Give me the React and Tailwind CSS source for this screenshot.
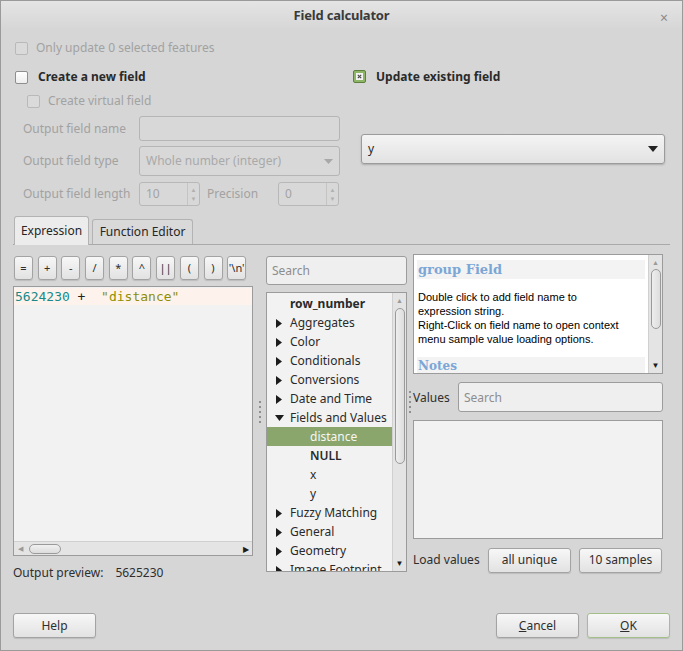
import React from 'react'

const BTN = 'rounded-[3px] border border-[#a3a3a3] bg-gradient-to-b from-[#f7f7f7] to-[#e2e2e2] shadow-[0_1px_1px_rgba(0,0,0,0.12)] flex items-center justify-center text-[#2e2e2e]'

function Check({ state = 'off', disabled = false }) {
  if (state === 'on') {
    return (
      <span className="w-[13px] h-[13px] rounded-[2px] border border-[#5f7f40] bg-[#8fb567] flex items-center justify-center shrink-0">
        <svg width="7" height="7" viewBox="0 0 7 7">
          <rect width="7" height="7" fill="#f4f4f4" />
          <path d="M1.8 1.8 L5.2 5.2 M5.2 1.8 L1.8 5.2" stroke="#4a4a4a" strokeWidth="1.2" />
        </svg>
      </span>
    )
  }
  return (
    <span
      className={`w-[13px] h-[13px] rounded-[2px] border shrink-0 ${
        disabled ? 'border-[#b9b9b9] bg-[#dadada]' : 'border-[#8e8e8e] bg-gradient-to-b from-white to-[#eeeeee]'
      }`}
    />
  )
}

function Spin({ value, w }) {
  return (
    <div className={`h-[24px] ${w} rounded-[3px] border border-[#b8b8b8] bg-[#d8d8d8] flex items-center`}>
      <span className="flex-1 pl-[6px] text-[#a3a3a3]">{value}</span>
      <div className="w-[12px] h-full border-l border-[#c4c4c4] flex flex-col items-center justify-center gap-[3px] text-[6px] leading-none text-[#b0b0b0]">
        <span>▲</span>
        <span>▼</span>
      </div>
    </div>
  )
}

function Arrow({ dir }) {
  if (dir === 'r') {
    return (
      <svg width="6" height="9" viewBox="0 0 6 9"><path d="M0 0 L6 4.5 L0 9 Z" fill="#1c1c1c" /></svg>
    )
  }
  return (
    <svg width="9" height="6" viewBox="0 0 9 6"><path d="M0 0 L9 0 L4.5 6 Z" fill="#1c1c1c" /></svg>
  )
}

const TREE = [
  { t: 'row_number', bold: true },
  { t: 'Aggregates', arrow: 'r' },
  { t: 'Color', arrow: 'r' },
  { t: 'Conditionals', arrow: 'r' },
  { t: 'Conversions', arrow: 'r' },
  { t: 'Date and Time', arrow: 'r' },
  { t: 'Fields and Values', arrow: 'd' },
  { t: 'distance', child: true, sel: true },
  { t: 'NULL', child: true, medium: true },
  { t: 'x', child: true },
  { t: 'y', child: true },
  { t: 'Fuzzy Matching', arrow: 'r' },
  { t: 'General', arrow: 'r' },
  { t: 'Geometry', arrow: 'r' },
  { t: 'Image Footprint', arrow: 'r' },
]

const OPS = ['=', '+', '-', '/', '*', '^', '||', '(', ')', "'\\n'"]

function VScroll({ thumbTop, thumbH }) {
  return (
    <div className="w-[14px] h-full bg-[#e4e4e4] border-l border-[#d0d0d0] flex flex-col items-center">
      <span className="mt-[4px] text-[7px] leading-none text-[#9a9a9a]">▲</span>
      <div
        className="w-[10px] rounded-[5px] border border-[#9a9a9a] bg-gradient-to-r from-[#eeeeee] to-[#dddddd]"
        style={{ marginTop: thumbTop, height: thumbH }}
      />
      <span className="mt-auto mb-[4px] text-[8px] leading-none text-[#1c1c1c]">▼</span>
    </div>
  )
}

function Dots({ cls = '' }) {
  return (
    <div className={`flex flex-col gap-[3px] ${cls}`}>
      {[0, 1, 2, 3, 4].map((i) => (
        <span key={i} className="w-[2px] h-[2px] bg-[#8f8f8f]" />
      ))}
    </div>
  )
}

export default function App() {
  return (
    <div className="w-[683px] h-[651px] bg-[#d6d6d6] border border-[#9a9a9a] flex flex-col font-['Noto_Sans',sans-serif] text-[12px] text-[#2e2e2e] overflow-hidden">
      {/* Title bar */}
      <div className="h-[29px] shrink-0 relative flex items-center justify-center bg-gradient-to-b from-[#e4e4e4] to-[#d6d6d6]">
        <span className="text-[13px] font-bold text-[#3a3a3a] tracking-[-0.2px]">Field calculator</span>
        <span className="absolute right-[14px] top-[6px] text-[14px] text-[#8a8a8a]">×</span>
      </div>

      <div className="flex-1 flex flex-col px-[12px]">
        {/* Only update */}
        <div className="mt-[11px] h-[14px] flex items-center gap-[8px] pl-[2px]">
          <Check disabled />
          <span className="text-[#a2a2a2]">Only update 0 selected features</span>
        </div>

        <div className="flex">
          {/* Left form */}
          <div className="w-[327px] shrink-0 flex flex-col">
            <div className="mt-[15px] h-[14px] flex items-center gap-[10px] pl-[2px]">
              <Check />
              <span className="font-bold text-[#2a2a2a]">Create a new field</span>
            </div>
            <div className="mt-[10px] h-[14px] flex items-center gap-[8px] pl-[14px]">
              <Check disabled />
              <span className="text-[#a2a2a2]">Create virtual field</span>
            </div>
            <div className="mt-[8px] h-[25px] flex items-center pl-[10px] text-[#a2a2a2]">
              <span className="w-[116px]">Output field name</span>
              <div className="h-full flex-1 rounded-[3px] border border-[#b5b5b5] bg-[#d8d8d8]" />
            </div>
            <div className="mt-[5px] h-[30px] flex items-center pl-[10px] text-[#a2a2a2]">
              <span className="w-[116px]">Output field type</span>
              <div className="h-full flex-1 rounded-[3px] border border-[#b5b5b5] bg-[#d8d8d8] flex items-center px-[6px]">
                <span className="flex-1 text-[#a9a9a9]">Whole number (integer)</span>
                <svg width="9" height="5" viewBox="0 0 9 5"><path d="M0 0 L9 0 L4.5 5 Z" fill="#a8a8a8" /></svg>
              </div>
            </div>
            <div className="mt-[6px] h-[24px] flex items-center pl-[10px] text-[#a2a2a2]">
              <span className="w-[116px]">Output field length</span>
              <Spin value="10" w="w-[61px]" />
              <span className="ml-[7px] w-[71px]">Precision</span>
              <Spin value="0" w="w-[61px]" />
            </div>
          </div>

          {/* Right */}
          <div className="flex-1 ml-[13px] flex flex-col">
            <div className="mt-[14px] h-[14px] flex items-center gap-[10px]">
              <Check state="on" />
              <span className="font-bold text-[#2a2a2a] pt-[2px]">Update existing field</span>
            </div>
            <div className="mt-[51px] ml-[8px] mr-[5px] h-[30px] rounded-[3px] border border-[#9b9b9b] bg-gradient-to-b from-[#f4f4f4] to-[#e2e2e2] shadow-[0_1px_2px_rgba(0,0,0,0.2)] flex items-center px-[6px]">
              <span className="flex-1 text-[#2a2a2a]">y</span>
              <svg width="10" height="6" viewBox="0 0 10 6"><path d="M0 0 L10 0 L5 6 Z" fill="#222" /></svg>
            </div>
          </div>
        </div>

        {/* Tabs */}
        <div className="mt-[11px] flex items-end h-[28px] border-b border-[#a9a9a9] pl-[1px]">
          <div className="h-[29px] -mb-px w-[75px] rounded-t-[3px] border border-b-0 border-[#b3b3b3] bg-[#ececec] flex items-center justify-center text-[#262626]">
            Expression
          </div>
          <div className="ml-[3px] h-[25px] w-[101px] rounded-t-[3px] border border-b-0 border-[#b3b3b3] bg-[#d9d9d9] flex items-center justify-center text-[#262626]">
            Function Editor
          </div>
        </div>

        {/* Panel */}
        <div className="flex items-start">
          {/* Expression column */}
          <div className="w-[240px] shrink-0 mt-[11px] flex flex-col">
            <div className="h-[24px] flex gap-[4.7px] pl-[1px]">
              {OPS.map((o) => (
                <div key={o} className={`${BTN} w-[19px] h-[24px] text-[11px]`}>{o}</div>
              ))}
            </div>
            <div className="mt-[6px] h-[270px] border border-[#9b9b9b] bg-[#f2f2f2] flex flex-col">
              <div className="mt-[1px] h-[17px] bg-[#fdf3ec] flex items-center pl-[1px] font-['DejaVu_Sans_Mono',monospace] text-[13px] whitespace-pre">
                <span className="text-[#168a8a]">5624230</span>
                <span className="text-[#222]"> +  </span>
                <span className="text-[#8f8f00]">"distance"</span>
              </div>
              <div className="flex-1" />
              <div className="h-[14px] bg-[#e4e4e4] border-t border-[#d0d0d0] flex items-center">
                <span className="ml-[4px] text-[7px] leading-none text-[#9a9a9a]">◀</span>
                <div className="ml-[6px] w-[32px] h-[10px] rounded-[5px] border border-[#9a9a9a] bg-gradient-to-b from-[#f0f0f0] to-[#dcdcdc]" />
                <span className="ml-auto mr-[3px] text-[8px] leading-none text-[#1c1c1c]">▶</span>
              </div>
            </div>
            <div className="mt-[9px] h-[16px] leading-[16px] flex">
              <span>Output preview:</span>
              <span className="ml-[12px]">5625230</span>
            </div>
          </div>

          {/* splitter */}
          <div className="w-[13px] shrink-0 flex justify-center">
            <Dots cls="mt-[156px]" />
          </div>

          {/* Function tree column */}
          <div className="w-[141px] shrink-0 mt-[11px] flex flex-col">
            <div className="h-[29px] rounded-[3px] border border-[#9c9c9c] bg-[#efefef] flex items-center px-[5px] pt-[1px] text-[#8d8d8d]">
              Search
            </div>
            <div className="mt-[7px] h-[280px] border border-[#9b9b9b] bg-[#f2f2f2] flex overflow-hidden">
              <div className="flex-1 flex flex-col overflow-hidden pt-[1px]">
                {TREE.map((r) => (
                  <div
                    key={r.t}
                    className={`h-[19px] shrink-0 flex items-center pt-[1px] ${r.sel ? 'bg-[#8ba66d] text-[#f6f6f6]' : 'text-[#2a2a2a]'}`}
                  >
                    <span className="w-[23px] shrink-0 flex items-center justify-center pl-[1px]">
                      {r.arrow && <Arrow dir={r.arrow} />}
                    </span>
                    <span
                      className={`whitespace-nowrap ${r.child ? 'pl-[20px]' : ''} ${r.bold ? 'font-bold' : ''} ${r.medium ? 'font-semibold' : ''}`}
                    >
                      {r.t}
                    </span>
                  </div>
                ))}
              </div>
              <VScroll thumbTop={4} thumbH={156} />
            </div>
          </div>

          {/* splitter */}
          <div className="w-[6px] shrink-0 flex justify-center">
            <Dots cls="mt-[146px]" />
          </div>

          {/* Help column */}
          <div className="w-[250px] shrink-0 mt-[9px] flex flex-col">
            <div className="h-[120px] border border-[#9b9b9b] bg-white flex overflow-hidden">
              <div className="flex-1 overflow-hidden pl-[3px] pr-[3px] pt-[5px] font-['Liberation_Sans',Arial,sans-serif] text-[11px] leading-[14px] text-black">
                <div className="h-[19px] bg-[#f3f3f3] pl-[1px] font-['DejaVu_Serif',serif] font-bold text-[13px] leading-[19px] text-[#7ba6d6]">
                  group Field
                </div>
                <p className="mt-[11px] pl-[1px]">
                  Double click to add field name to<br />
                  expression string.<br />
                  Right-Click on field name to open context<br />
                  menu sample value loading options.
                </p>
                <div className="mt-[11px] h-[19px] bg-[#f3f3f3] pl-[1px] font-['DejaVu_Serif',serif] font-bold text-[12px] leading-[19px] text-[#7ba6d6]">
                  Notes
                </div>
              </div>
              <VScroll thumbTop={3} thumbH={60} />
            </div>
            <div className="mt-[8px] h-[30px] flex items-center">
              <span className="w-[45px] pt-[2px]">Values</span>
              <div className="h-full flex-1 rounded-[3px] border border-[#9c9c9c] bg-[#efefef] flex items-center px-[5px] pt-[1px] text-[#8d8d8d]">
                Search
              </div>
            </div>
            <div className="mt-[8px] h-[119px] border border-[#9b9b9b] bg-[#f2f2f2]" />
            <div className="mt-[8px] h-[25px] flex items-center pt-[1px]">
              <span className="w-[75px]">Load values</span>
              <div className={`${BTN} w-[83px] h-[25px]`}>all unique</div>
              <div className={`${BTN} ml-[8px] w-[83px] h-[25px]`}>10 samples</div>
            </div>
          </div>
        </div>

        <div className="flex-1" />

        {/* Bottom buttons */}
        <div className="mb-[12px] h-[25px] flex items-center">
          <div className={`${BTN} w-[83px] h-[25px]`}>Help</div>
          <div className={`${BTN} ml-auto w-[83px] h-[25px]`}>
            <span><span className="underline">C</span>ancel</span>
          </div>
          <div className={`${BTN} ml-[8px] w-[83px] h-[25px] border-[#a4c08a]`}>
            <span><span className="underline">O</span>K</span>
          </div>
        </div>
      </div>
    </div>
  )
}
